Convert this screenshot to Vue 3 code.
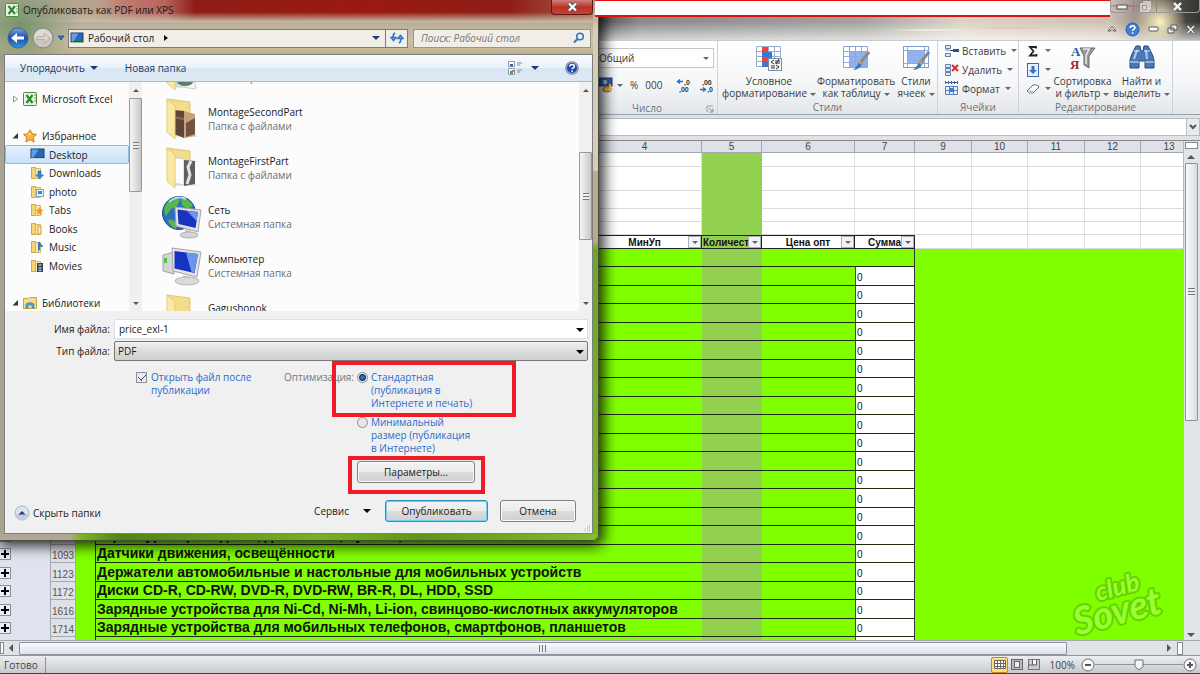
<script setup>
import { ref } from 'vue'

const fileName = ref('price_exl-1')
const openAfter = ref(true)
const optimize = ref('standard')

const favorites = [
  { name: 'Desktop', kind: 'desktop' },
  { name: 'Downloads', kind: 'down' },
  { name: 'photo', kind: 'photo' },
  { name: 'Tabs', kind: 'star' },
  { name: 'Books', kind: 'book' },
  { name: 'Music', kind: 'music' },
  { name: 'Movies', kind: 'film' },
]

const files = [
  { name: '', type: 'Папка с файлами', icon: 'folder0' },
  { name: 'MontageSecondPart', type: 'Папка с файлами', icon: 'folder1' },
  { name: 'MontageFirstPart', type: 'Папка с файлами', icon: 'folder2' },
  { name: 'Сеть', type: 'Системная папка', icon: 'net' },
  { name: 'Компьютер', type: 'Системная папка', icon: 'pc' },
  { name: 'Gagushonok', type: 'Папка с файлами', icon: 'folder3' },
]

const columns = ['', '3', '4', '5', '6', '7', '9', '10', '11', '12', '13']

const named = [
  { n: '1011', text: 'Гарнитуры проводные, джойстики, пульты, мыши', sum: '0' },
  { n: '1093', text: 'Датчики движения, освещённости', sum: '0' },
  { n: '1123', text: 'Держатели автомобильные и настольные для мобильных устройств', sum: '0' },
  { n: '1172', text: 'Диски CD-R, CD-RW, DVD-R, DVD-RW, BR-R, DL, HDD, SSD', sum: '0' },
  { n: '1616', text: 'Зарядные устройства для Ni-Cd, Ni-Mh, Li-ion, свинцово-кислотных аккумуляторов', sum: '0' },
  { n: '1714', text: 'Зарядные устройства для мобильных телефонов, смартфонов, планшетов', sum: '0' },
]
const rows = [...Array.from({ length: 14 }, () => ({ n: '', text: '', sum: '0' })), ...named, { n: '', text: '', sum: '' }]
</script>

<template>
  <div class="screen">
    <main class="excel">
      <header class="titlebar">
        <div class="wincontrols">
          <button aria-label="Свернуть"><svg width="12" height="8"><rect x="1" y="3" width="10" height="4" fill="#eee" stroke="#555" /></svg></button>
          <button aria-label="Восстановить"><svg width="12" height="11"><path d="M4 1h7v7h-2M2 3h7v7h-7z" fill="none" stroke="#ddd" stroke-width="1.5" /><rect x="4" y="5" width="3" height="3" fill="#ddd" /></svg></button>
          <button class="wide" aria-label="Закрыть"><svg width="12" height="9"><path d="M2 1l7 7M9 1l-7 7" stroke="#f5f5f5" stroke-width="2.4" /></svg></button>
        </div>
        <div class="mdi">
          <button aria-label="Свернуть ленту"><svg width="10" height="8"><path d="M1 6L5 1.500L9 6L7 6L5 4.500L3 6z" fill="#fff" stroke="#555" /></svg></button>
          <button aria-label="Справка"><svg width="15" height="15"><circle cx="7.500" cy="7.500" r="6.500" fill="#3d7fd0" stroke="#2a62aa" /><path d="M5.200 6c0-3 4.800-3 4.800-.4 0 1.600-2.400 1.600-2.400 3.300M7.600 10.200v1.600" stroke="#fff" stroke-width="1.600" fill="none" /></svg></button>
          <button aria-label="Свернуть книгу"><svg width="11" height="6"><rect x="1" y="1" width="9" height="4" rx="1" fill="#fff" stroke="#555" /></svg></button>
          <button aria-label="Восстановить книгу"><svg width="11" height="10"><path d="M4 1h6v5h-6zM1 4h6v5h-6z" fill="#eee" stroke="#555" /></svg></button>
          <button aria-label="Закрыть книгу"><svg width="10" height="9"><path d="M1.500 1l6.500 7M8 1l-6.500 7" stroke="#555" stroke-width="3" /><path d="M1.500 1l6.500 7M8 1l-6.500 7" stroke="#eee" stroke-width="1.500" /></svg></button>
        </div>
      </header>

      <section class="ribbon">
        <div class="group number">
          <div class="numtools">
            <button class="numfmt">Общий<i class="tri"></i></button>
            <div class="numrow">
              <button aria-label="Финансовый формат">
                <svg width="16" height="16"><rect x="1" y="1" width="13" height="8" fill="#2f5d9f" stroke="#1e427a" /><circle cx="7" cy="5" r="2.200" fill="#a9c4ea" /><path d="M5 11q4-3 8 0v3q-4 2-8 0z" fill="#e5a93c" stroke="#a66b12" /><path d="M12 7v7" stroke="#f3c04f" stroke-width="2" /></svg><i class="tri"></i>
              </button>
              <button>%</button>
              <button>000</button>
              <span class="vline"></span>
              <button aria-label="Увеличить разрядность"><svg width="16" height="15"><path d="M7 3.500H2M4 1.500L1.500 3.500L4 5.500" stroke="#2b6fc4" stroke-width="1.400" fill="none" /><text x="8" y="7" class="dec">,0</text><text x="3" y="14" class="dec">,00</text></svg></button>
              <button aria-label="Уменьшить разрядность"><svg width="16" height="15"><text x="3" y="7" class="dec">,00</text><path d="M1 11.500h5M4 9.500l2.500 2L4 13.500" stroke="#2b6fc4" stroke-width="1.400" fill="none" /><text x="8" y="14" class="dec">,0</text></svg></button>
            </div>
          </div>
          <div class="gtitle">Число<svg class="launch" width="8" height="8"><path d="M1 7V1h6" fill="none" stroke="#999" /><path d="M3 3l3 3M7 3.500V7H3.500" fill="none" stroke="#888" /></svg></div>
        </div>

        <div class="group styles">
          <div class="big">
            <button class="bigbtn cond">
              <svg width="28" height="26">
                <path d="M1.500 1.500h24v20h-24zM1.500 6.500h24M1.500 11.500h24M1.500 16.500h24M7.500 1.500v20M13.500 1.500v20M19.500 1.500v20" fill="#fff" stroke="#98aed0" />
                <rect x="7" y="2" width="6" height="5" fill="#f0413c" /><rect x="7" y="7" width="10" height="5" fill="#3e73d2" /><rect x="7" y="12" width="10" height="5" fill="#f0413c" /><rect x="7" y="17" width="6" height="5" fill="#3e73d2" />
                <rect x="13.500" y="13.500" width="13" height="12" fill="#f5f5f5" stroke="#7890a8" /><path d="M19 15l-3 2 3 2M20 16h5M20 18h5M24 14l-3 5M16 21h4M16 23h4M21 20l3 2-3 2" stroke="#333" fill="none" />
              </svg>
              <span>Условное<br>форматирование<i class="tri"></i></span>
            </button>
            <button class="bigbtn fmt">
              <svg width="28" height="26">
                <path d="M1.500 1.500h24v21h-24z" fill="#fff" stroke="#8aa6d6" /><rect x="8" y="6" width="17" height="16" fill="#8fb3f0" />
                <path d="M1.500 6.500h24M1.500 11.500h24M1.500 17.500h24M7.500 1.500v21M13.500 1.500v21M19.500 1.500v21" stroke="#8fa9d8" />
                <path d="M27 7L18 18" stroke="#8a8a8a" stroke-width="3" /><path d="M18 15l3 3q-3 7-10 7q4-3 7-10z" fill="#3d78bd" /><path d="M17 16l3 3" stroke="#d49a58" stroke-width="2.500" />
              </svg>
              <span>Форматировать<br>как таблицу<i class="tri"></i></span>
            </button>
            <button class="bigbtn cells">
              <svg width="28" height="26">
                <path d="M1.500 1.500h25v21h-25z" fill="#fff" stroke="#7d9bc8" /><path d="M1.500 5.500h25M1.500 18.500h25M5.500 1.500v21M22.500 1.500v21" stroke="#8fa9d8" /><rect x="6" y="6" width="16" height="12" fill="#8fb3f0" />
                <path d="M27 7L18 18" stroke="#8a8a8a" stroke-width="3" /><path d="M18 15l3 3q-3 7-10 7q4-3 7-10z" fill="#3d78bd" /><path d="M17 16l3 3" stroke="#d49a58" stroke-width="2.500" />
              </svg>
              <span>Стили<br>ячеек<i class="tri"></i></span>
            </button>
          </div>
          <div class="gtitle">Стили</div>
        </div>

        <div class="group cellgrp">
          <div class="small">
            <button><svg width="16" height="14"><path d="M1.500 1.500h5v3h-5zM1.500 9.500h5v3h-5zM1.500 6h4" fill="#dfe9f8" stroke="#5f7fae" /><path d="M6 6.500h3" stroke="#333" /><rect x="9" y="5" width="6" height="3" fill="#24508f" /></svg>Вставить<i class="tri"></i></button>
            <button><svg width="16" height="14"><path d="M1.500 1.500h5v3h-5zM1.500 5.500h5v3h-5zM1.500 9.500h5v3h-5z" fill="#dfe9f8" stroke="#5f7fae" /><path d="M8 2l6 6M14 2l-6 6" stroke="#e0262c" stroke-width="2" /></svg>Удалить<i class="tri"></i></button>
            <button><svg width="16" height="15"><path d="M1 1.500h12M1.500 0v3M4.500 0v3M7.500 0v3M10.500 0v3M13.500 0v3" stroke="#445f8c" /><path d="M1.500 5.500h12v8h-12zM1.500 9.500h12M5.500 5.500v8M9.500 5.500v8" fill="#e5eefb" stroke="#5f7fae" /><rect x="5" y="7" width="5" height="4" fill="#3f79cf" /></svg>Формат<i class="tri"></i></button>
          </div>
          <div class="gtitle">Ячейки</div>
        </div>

        <div class="group editgrp">
          <div class="editrow">
            <div class="small icons">
              <button aria-label="Сумма"><svg width="14" height="14"><path d="M10 4.500V3H4l3.500 4.200L4 11.500h6.500V10" fill="none" stroke="#222" stroke-width="1.800" /></svg><i class="tri"></i></button>
              <button aria-label="Заполнить"><svg width="14" height="14"><rect x="1.500" y=".5" width="11" height="13" fill="#e8f0fb" stroke="#3c66a8" /><path d="M5.500 3h3v4h2.500L7 11 3 7h2.500z" fill="#2f72cc" /></svg><i class="tri"></i></button>
              <button aria-label="Очистить"><svg width="14" height="14"><path d="M1 9l6-6q3-1 5 1l1 1-6 6H3z" fill="#fff" stroke="#566a8a" /><path d="M1.500 9.500l2-1.500 4 1-1 2.500H3z" fill="#b9c8e0" /></svg><i class="tri"></i></button>
            </div>
            <button class="bigbtn sort">
              <svg width="30" height="28"><text x="3" y="12" class="ltr a">А</text><text x="2" y="25" class="ltr ya">Я</text><path d="M12 4h15l-6 8v12l-5-3v-9z" fill="#9a9a9a" stroke="#6b6b6b" /><path d="M15 5h6l-3 7v8" fill="none" stroke="#e8e8e8" stroke-width="1.500" /></svg>
              <span>Сортировка<br>и фильтр<i class="tri"></i></span>
            </button>
            <button class="bigbtn find">
              <svg width="28" height="28"><path d="M6 6l2-4h4l1 5h2l1-5h4l2 4q3 5 4 10v8h-9v-7h-6v7H2v-8q1-5 4-10z" fill="#4c78b6" stroke="#28497b" /><path d="M6 15l3-9M19 15l-1-9" stroke="#b5cdee" stroke-width="2" /><path d="M2 18h9M17 18h9M6 7h6M16 7h6" stroke="#dce8f8" /></svg>
              <span>Найти и<br>выделить<i class="tri"></i></span>
            </button>
          </div>
          <div class="gtitle">Редактирование</div>
        </div>
        <div class="ribbonend"></div>
      </section>

      <section class="formula">
        <input class="fx" aria-label="Строка формул">
        <button class="fxdrop" aria-label="Развернуть"><svg width="8" height="8"><path d="M1 2l3 3 3-3" fill="none" stroke="#555" stroke-width="2" /></svg></button>
      </section>

      <section class="work">
        <div class="sheet">
          <table>
            <colgroup>
              <col class="w50"><col class="w26"><col class="w19"><col class="wname"><col class="w114"><col class="w60"><col class="w93"><col class="w60"><col class="w57"><col class="w56"><col class="w57"><col class="w56"><col>
            </colgroup>
            <thead>
              <tr>
                <th class="gut"></th><th class="corner"></th>
                <th v-for="(c, i) in columns" :key="i" class="colh">{{ c }}</th>
              </tr>
            </thead>
            <tbody class="top">
              <tr v-for="k in 5" :key="k" :class="'r' + k">
                <td class="gut"></td><td class="rowh"></td><td></td><td></td><td></td><td class="olive"></td><td></td><td></td><td></td><td></td><td></td><td></td><td></td>
              </tr>
              <tr class="filters">
                <td class="gut"></td><td class="rowh"></td><td></td><td class="hd"></td>
                <td class="hd"><div><span>МинУп</span><button aria-label="Фильтр МинУп"><i class="tri"></i></button></div></td>
                <td class="hd olive"><div class="start"><span>Количест</span><button aria-label="Фильтр Количество"><i class="tri"></i></button></div></td>
                <td class="hd"><div><span>Цена опт</span><button aria-label="Фильтр Цена опт"><i class="tri"></i></button></div></td>
                <td class="hd"><div class="end"><span>Сумма</span><button aria-label="Фильтр Сумма"><i class="tri"></i></button></div></td>
                <td></td><td></td><td></td><td></td><td></td>
              </tr>
            </tbody>
            <tbody class="goods">
              <tr class="first">
                <td class="gut"></td><td class="rowh"></td><td class="lime"></td><td class="lime line name" colspan="2"></td><td class="olive line"></td><td class="lime line"></td><td class="lime line last"></td><td class="lime" colspan="5"></td>
              </tr>
              <tr v-for="(r, i) in rows" :key="i">
                <td class="gut"><button v-if="r.n" class="plus" :aria-label="'Развернуть ' + r.n"><svg width="8" height="8"><path d="M4 0v8M0 4h8" stroke="#000" stroke-width="2" /></svg></button></td>
                <td class="rowh">{{ r.n }}</td>
                <td class="lime"></td>
                <td class="lime line name" colspan="2">{{ r.text }}</td>
                <td class="olive line"></td>
                <td class="lime line"></td>
                <td class="sum line last">{{ r.sum }}</td>
                <td class="lime" colspan="5"></td>
              </tr>
            </tbody>
          </table>
          <svg class="mark" width="106" height="90" viewBox="0 0 106 90">
            <g transform="rotate(-15 50 60)">
              <text x="7" y="75" class="sovet">Sovet</text>
              <text x="36" y="47" class="club">club</text>
            </g>
          </svg>
        </div>
        <div class="vscroll">
          <span class="split"></span>
          <i class="up"></i>
          <span class="thumb"><b class="grip"></b></span>
          <span class="fill"></span>
          <i class="down"></i>
        </div>
      </section>

      <div class="hscroll">
        <span class="stub"></span><i class="left"></i>
        <span class="thumb"><b class="grip side"></b></span>
        <span class="space"></span>
        <i class="right"></i><span class="hsplit"></span><span class="hend"></span>
      </div>

      <footer class="status">
        <span class="ready">Готово</span>
        <span class="grow"></span>
        <button class="view on" aria-label="Обычный"><svg width="12" height="9"><path d="M.5.5h11v8H.5zM.5 3.500h11M.5 6.500h11M3.500.5v8M6.500.5v8M9.500.5v8" fill="#fff" stroke="#66645c" /></svg></button>
        <button class="view" aria-label="Разметка страницы"><svg width="12" height="11"><rect x=".5" y=".5" width="11" height="10" fill="#bbb" stroke="#666" /><rect x="3.500" y="2.500" width="5" height="6" fill="#eee" stroke="#666" /></svg></button>
        <button class="view" aria-label="Страничный режим"><svg width="12" height="11"><rect x=".5" y=".5" width="11" height="10" fill="#ccc" stroke="#777" /><path d="M4.500 0v6M8.500 0v6H0" fill="none" stroke="#666" /><rect x="5" y="1" width="3" height="4" fill="#fff" /></svg></button>
        <span class="pct">100%</span>
        <button class="zoombtn" aria-label="Уменьшить"><svg width="14" height="14"><circle cx="7" cy="7" r="6" fill="#fafafa" stroke="#6a6f76" /><path d="M4 7h6" stroke="#555" stroke-width="2" /></svg></button>
        <span class="track"><svg width="10" height="12"><path d="M1 1h8v6.500L5 11 1 7.500z" fill="#f4f4f4" stroke="#6a6f76" /></svg></span>
        <button class="zoombtn" aria-label="Увеличить"><svg width="14" height="14"><circle cx="7" cy="7" r="6" fill="#fafafa" stroke="#6a6f76" /><path d="M4 7h6M7 4v6" stroke="#555" stroke-width="2" /></svg></button>
      </footer>
    </main>

    <section class="dialog" role="dialog" aria-label="Опубликовать как PDF или XPS">
      <header class="dtitle">
        <svg width="14" height="14"><rect x=".5" y=".5" width="13" height="13" rx="1" fill="#e9f3e2" stroke="#4d8a3d" /><path d="M3.500 3l6.500 8M10 3l-6.500 8" stroke="#2c8a2f" stroke-width="2.200" /><path d="M11 3h2M11 6h2M11 9h2" stroke="#6aa65a" /></svg>
        <span>Опубликовать как PDF или XPS</span>
        <button class="dclose" aria-label="Закрыть"><svg width="12" height="10"><path d="M2 1.500l7 7M9 1.500l-7 7" stroke="#555" stroke-width="4" /><path d="M2 1.500l7 7M9 1.500l-7 7" stroke="#fff" stroke-width="2.200" /></svg></button>
      </header>

      <div class="address">
        <button aria-label="Назад"><svg width="22" height="22"><defs><linearGradient id="bk" x1="0" y1="0" x2="0" y2="1"><stop offset="0" stop-color="#7fa3dd" /><stop offset=".5" stop-color="#1b4da8" /><stop offset="1" stop-color="#2f9bea" /></linearGradient></defs><circle cx="11" cy="11" r="10" fill="url(#bk)" stroke="#4a5f86" /><path d="M4 11l6-5v3.500h7v3h-7V16z" fill="#fff" /></svg></button>
        <button aria-label="Вперёд"><svg width="22" height="22"><circle cx="11" cy="11" r="10" fill="#c9c6bf" stroke="#85817a" /><path d="M2 11a9 9 0 0 1 18 0z" fill="#dedbd6" /><path d="M18 11l-6-5v3.500H5v3h7V16z" fill="#d8d5cf" stroke="#b6b2aa" /></svg></button>
        <svg width="8" height="6" class="histo"><path d="M1 1h6L4 5z" fill="#3a78c0" stroke="#27599a" /></svg>
        <div class="path">
          <svg width="14" height="12"><rect x="1" y="1" width="12" height="9" fill="#2867b4" stroke="#17396b" /><path d="M1.500 1.500h7l-5 8h-2z" fill="#63a0df" /><path d="M1 10.500h12" stroke="#9cc26a" /></svg>
          <span>Рабочий стол</span>
          <svg width="6" height="8"><path d="M1 1l4 3-4 3z" fill="#111" /></svg>
          <i class="tri navy"></i>
        </div>
        <button class="refresh" aria-label="Обновить"><svg width="14" height="12"><path d="M5 1Q3 2 3 6M1 5.500h5L3.500 8.500z" fill="none" stroke="#2f74c8" stroke-width="1.600" /><path d="M9 11q2-1 2-5M8 6.500h5L10.500 3.500z" fill="none" stroke="#2f74c8" stroke-width="1.600" /></svg></button>
        <label class="search"><input type="search" placeholder="Поиск: Рабочий стол" aria-label="Поиск"><svg width="12" height="12"><circle cx="7" cy="4.500" r="3.300" fill="none" stroke="#2f74c0" stroke-width="1.600" /><path d="M4.500 7L1 10.500" stroke="#2f74c0" stroke-width="2" /></svg></label>
      </div>

      <div class="client">
        <nav class="tools">
          <button>Упорядочить<i class="tri navy"></i></button>
          <button>Новая папка</button>
          <button class="viewsel" aria-label="Вид"><svg width="15" height="14"><path d="M.5.5h6v5h-6zM.5 7.500h6v6h-6z" fill="#fff" stroke="#8b9bb2" /><rect x="2" y="3" width="3" height="2" fill="#355f93" /><rect x="2" y="10" width="3" height="3" fill="#5aa03a" /><path d="M3 9h3v2z" fill="#d85a2a" /><path d="M9 2h5M9 4h3M9 9h5M9 11h3" stroke="#7f8fa6" /></svg><i class="tri navy"></i></button>
          <button class="help" aria-label="Справка"><svg width="14" height="14"><circle cx="7" cy="7" r="6" fill="#1f49b4" stroke="#9aa0ae" stroke-width="2" /><path d="M4.800 5.600c0-2.800 4.600-2.800 4.600-.3 0 1.600-2.300 1.500-2.300 3M7.100 9.400v1.600" stroke="#fff" stroke-width="1.500" fill="none" /></svg></button>
        </nav>

        <div class="panes">
          <div class="tree">
            <div class="node root"><svg width="8" height="8"><path d="M1.500 1l4 3-4 3z" fill="#fff" stroke="#999" /></svg>
              <svg width="15" height="14"><rect x=".5" y=".5" width="13" height="13" rx="1" fill="#e9f3e2" stroke="#4d8a3d" /><path d="M3.500 3l6 8M9.500 3l-6 8" stroke="#2c8a2f" stroke-width="2.200" /><path d="M11 3h2M11 6h2M11 9h2" stroke="#6aa65a" /></svg>Microsoft Excel</div>
            <div class="node root gap"><svg width="8" height="8"><path d="M6 1v5.500H.5z" fill="#333" /></svg>
              <svg width="15" height="14"><path d="M7 .8l2 4 4.500.6-3.300 3 .9 4.600L7 10.800 2.900 13l.9-4.600-3.300-3L5 4.800z" fill="#fbb62e" stroke="#cf7d22" /><path d="M7 3l1 3H5z" fill="#ffe7a0" /></svg>Избранное</div>
            <a v-for="f in favorites" :key="f.name" href="#" class="node leaf" :class="{ sel: f.kind === 'desktop' }">
              <svg v-if="f.kind === 'desktop'" width="15" height="13"><rect x="1" y="1" width="13" height="9" fill="#2867b4" stroke="#17396b" /><path d="M1.500 1.500h7l-5 8h-2z" fill="#63a0df" /><path d="M1 10.500h13" stroke="#c8d4de" /></svg>
              <svg v-else width="15" height="14">
                <path d="M1.500 1.500h4v11h-4z" fill="#f3d67a" stroke="#cfa649" /><path d="M5.500 2.500h5v10h-5z" fill="#fae9a8" stroke="#d8b45c" />
                <path v-if="f.kind === 'down'" d="M8 5h3v4h2.500L9.500 13 6 9h2z" fill="#2c86dd" stroke="#1c5eae" stroke-width=".6" />
                <g v-else-if="f.kind === 'photo'"><rect x="6.500" y="4.500" width="7" height="7" fill="#e6f2fa" stroke="#8fa4b5" /><rect x="8" y="6" width="4" height="3" fill="#3f87c9" /></g>
                <path v-else-if="f.kind === 'star'" d="M9.500 4l1.200 2.500 2.800.3-2 2 .6 3-2.600-1.400L7 11.800l.5-3-2-2 2.800-.3z" fill="#f5941f" />
                <path v-else-if="f.kind === 'book'" d="M8 4h3v8H8z" fill="#fdf3c8" stroke="#c89a3a" />
                <path v-else-if="f.kind === 'music'" d="M9 2v8M9 2q0 3 3.500 4.500M8 10.500h1" stroke="#2f7bd0" stroke-width="2" fill="none" />
                <g v-else><rect x="7" y="4" width="6" height="9" fill="#34414f" /><path d="M8.500 6h3M8.500 9h3M8.500 11.500h3" stroke="#9fc3de" stroke-width="1.500" /></g>
              </svg>{{ f.name }}</a>
            <div class="node root gap"><svg width="8" height="8"><path d="M6 1v5.500H.5z" fill="#333" /></svg>
              <svg width="15" height="14"><path d="M.5 2.500h5l1-1h7v11H.5z" fill="#f5dc85" stroke="#c9a24a" /><path d="M3 12V8q4-3 8 0v4h-2V9H5v3z" fill="#4ba5dc" stroke="#2d7db8" stroke-width=".6" /></svg>Библиотеки</div>
          </div>
          <div class="wscroll treescroll"><i class="up"></i><span class="thumb t1"><b class="grip"></b></span><span class="rest"></span><i class="down"></i></div>
          <div class="files">
            <ul>
              <li v-for="(f, i) in files" :key="i">
                <svg v-if="f.icon === 'net'" width="42" height="44">
                  <circle cx="18" cy="18" r="16.500" fill="#2d6fc0" stroke="#1d4f95" /><path d="M6 8q8-7 13-3l-3 6-6 3-5 7q-4-7 1-13zM20 3q9 1 12 8l-6 3-5-4zM9 24l7 3-1 7q-6-3-8-8z" fill="#57b747" /><path d="M8 7q8-7 17-3" stroke="#b5dcf5" stroke-width="2" fill="none" />
                  <path d="M14 12l26 3-3 22-22-6z" fill="#e2e2e2" stroke="#a5a5a5" /><path d="M16.500 14.500l20.500 2.500-2.500 16-17-4z" fill="#1634c0" /><path d="M26 16l11 1-1.500 9z" fill="#6f93f0" /><path d="M24 34l6 2v3h-6z" fill="#c8c8c8" /><ellipse cx="28" cy="40" rx="9" ry="3" fill="#d5d5d5" stroke="#b0b0b0" />
                </svg>
                <svg v-else-if="f.icon === 'pc'" width="42" height="44">
                  <path d="M2 11l11-3v22l-11-3z" fill="#d4d4d4" stroke="#a3a3a3" /><rect x="3" y="14" width="3" height="5" fill="#4cc63a" />
                  <path d="M11 4l29 4-4 25-24-6z" fill="#e4e4e4" stroke="#a5a5a5" /><path d="M13.500 7l23.500 3-3.500 19-20-4.500z" fill="#1634c0" /><path d="M25 8.500l12 1.500-3.500 18.500-3-.5z" fill="#6f93f0" /><path d="M22 31l8 2v4h-8z" fill="#c8c8c8" /><ellipse cx="26" cy="37" rx="12" ry="4" fill="#dadada" stroke="#b5b5b5" />
                </svg>
                <svg v-else width="42" height="44">
                  <path d="M12 37h22l4 3H14z" fill="#e9e9e9" />
                  <path d="M6 2l23 3v33H10z" fill="#f4dc8a" stroke="#e2c672" />
                  <g v-if="f.icon === 'folder1'"><path d="M13 13l10 1v27l-10-4z" fill="#5f4538" /><path d="M23 14l11 3v22l-11 2z" fill="#c7a37b" /><path d="M25 26l9-5v16l-9 3z" fill="#715342" /><path d="M13 20l10 2" stroke="#8a6a55" stroke-width="2" /></g>
                  <g v-else-if="f.icon === 'folder2'"><path d="M12 11l11 2v26l-11-2z" fill="#fbfbfb" stroke="#ccc" /><path d="M23 14l11 1v23l-11 2z" fill="#5f5f5f" /><path d="M30 15l-3 6 2 8-3 9" stroke="#e3e3e3" stroke-width="3" fill="none" /></g>
                  <g v-else-if="f.icon === 'folder0'"><path d="M14 28h20v13l-18-3z" fill="#f7f7f7" stroke="#ccc" /><ellipse cx="24" cy="34" rx="8" ry="4" fill="#5d7f67" /></g>
                  <path d="M6 2l8 7v33L6 35z" fill="#fae9a6" stroke="#e6cb78" />
                </svg>
                <div><p>{{ f.name }}</p><p class="sub">{{ f.type }}</p></div>
              </li>
            </ul>
          </div>
          <div class="wscroll"><i class="up"></i><span class="rest top2"></span><span class="thumb t2"><b class="grip"></b></span><span class="rest"></span><i class="down"></i></div>
        </div>

        <form class="form" @submit.prevent>
          <div class="fields">
            <label for="fname">Имя файла:</label>
            <div class="combo"><input id="fname" v-model="fileName"><i class="tri black"></i></div>
            <label for="ftype">Тип файла:</label>
            <div class="combo gray"><select id="ftype"><option>PDF</option></select><i class="tri black"></i></div>
          </div>
          <div class="options">
            <label class="opt check"><input v-model="openAfter" type="checkbox"><span>Открыть файл после<br>публикации</span></label>
            <span class="optlabel">Оптимизация:</span>
            <div class="radios">
              <label class="opt"><input v-model="optimize" type="radio" name="opt" value="standard"><span>Стандартная<br>(публикация в<br>Интернете и печать)</span></label>
              <label class="opt"><input v-model="optimize" type="radio" name="opt" value="min"><span>Минимальный<br>размер (публикация<br>в Интернете)</span></label>
              <button class="btn params">Параметры...</button>
            </div>
          </div>
          <div class="actions">
            <button class="hide"><svg width="16" height="16"><circle cx="8" cy="8" r="7" fill="#dde5f0" stroke="#aab4c4" /><path d="M2 9a6 6 0 0 0 12 0z" fill="#c2cedf" /><path d="M4.500 9.500h7L8 6z" fill="#1f3f7a" /></svg>Скрыть папки</button>
            <button class="service">Сервис<i class="tri black"></i></button>
            <button class="btn primary">Опубликовать</button>
            <button class="btn cancel">Отмена</button>
          </div>
          <svg class="resize" width="8" height="8"><path d="M6 1h1M4 3h1M6 3h1M2 5h1M4 5h1M6 5h1M1 7h1M4 7h1M6 7h1" stroke="#aaa" /></svg>
        </form>
      </div>
      <div class="mark-box one"></div>
      <div class="mark-box two"></div>
    </section>
    <div class="redbar"></div>
  </div>
</template>

<style>
html, body { margin: 0; overflow: hidden; }
</style>

<style scoped>
* { box-sizing: border-box; }
.screen { position: relative; height: 100vh; overflow: hidden; font-family: "Open Sans", "Noto Sans", sans-serif; font-size: 10px; color: #1e1e1e; }
button { font: inherit; color: inherit; background: none; border: 0; padding: 0; margin: 0; display: flex; align-items: center; }
input, select { font: inherit; color: inherit; margin: 0; }
svg { display: block; flex: none; }
p { margin: 0; }
.tri { display: inline-block; flex: none; width: 0; height: 0; border: 3px solid transparent; border-top-color: #666; border-bottom: 0; vertical-align: middle; margin-left: 3px; }
.tri.navy { border-width: 4px 4px 0; border-top-color: #1e3a6e; margin-left: 5px; }
.tri.black { border-width: 4px 4px 0; border-top-color: #000; }

.excel { height: 100%; display: flex; flex-direction: column; background: #dfe3e8; }
.titlebar { height: 40px; flex: none; display: flex; flex-direction: column; align-items: flex-end; gap: 9px;
  background:
    radial-gradient(circle at 1160px 22px, #fff3c4 0, #fff3c400 26px),
    radial-gradient(ellipse at 1122px 6px, #b04045 0, #b0404500 28px),
    radial-gradient(ellipse at 1010px 28px, #e9b8b0 0, #e9b8b000 44px),
    radial-gradient(ellipse at 930px 30px, #f8f5e6 0, #f8f5e600 44px),
    linear-gradient(#0000 22px, #ffffffa8 40px),
    linear-gradient(90deg, #555 0, #555 598px, #8a8a8a 640px, #a3a29e 860px, #dcd3c6 960px, #cfc0b4 1110px, #4d4a44 1180px, #333 100%); }
.wincontrols { display: flex; height: 13px; border: solid #999; border-width: 0 1px 1px; border-radius: 0 0 4px 4px; }
.wincontrols button { width: 23px; justify-content: center; border-right: 1px solid #888; }
.wincontrols .wide { width: 42px; border: 0; }
.mdi { display: flex; align-items: center; gap: 8px; padding-right: 4px; height: 14px; }

.ribbon { height: 75px; flex: none; display: flex; justify-content: flex-end; background: linear-gradient(#fff, #f6f7f9 55%, #e3e6ea); border-top: 1px solid #c9ccd0; border-bottom: 1px solid #9aa0a8; color: #3b3b3b; }
.group { display: flex; flex-direction: column; justify-content: space-between; border-right: 1px solid #cfd3d8; }
.group.number { width: 141px; }
.group.styles { width: 220px; }
.group.cellgrp { width: 81px; }
.group.editgrp { width: 154px; }
.ribbonend { width: 27px; }
.gtitle { position: relative; text-align: center; line-height: 13px; color: #6c727a; }
.launch { position: absolute; right: 3px; top: 3px; }
.numtools { padding: 7px 3px 0 1px; }
.numfmt { width: 100%; height: 20px; border: 1px solid #c3c7cc; background: #fff; padding: 0 4px 0 20px; justify-content: space-between; }
.numrow { display: flex; align-items: center; height: 34px; padding-left: 20px; gap: 7px; }
.vline { width: 1px; height: 16px; background: #d0d4d8; }
.dec { font: bold 7px "Liberation Sans", sans-serif; fill: #333; }
.big { display: flex; padding: 4px 0 0 5px; }
.bigbtn { flex-direction: column; gap: 4px; line-height: 12px; text-align: center; white-space: nowrap; }
.cond { width: 92px; }
.fmt { width: 82px; }
.cells { width: 38px; }
.small { display: flex; flex-direction: column; padding: 0 0 0 6px; }
.small button { height: 19px; gap: 2px; }
.editrow { display: flex; }
.small.icons { padding: 0 0 0 7px; width: 32px; }
.editrow .bigbtn { padding-top: 3px; gap: 3px; }
.sort { width: 63px; }
.find { width: 55px; }
.ltr { font: bold 13px "Liberation Serif", serif; }
.ltr.a { fill: #2856a6; }
.ltr.ya { fill: #9c2b2b; }

.formula { height: 25px; flex: none; display: flex; padding: 3px 0 4px; background: #dfe3e8; }
.fx { flex: 1; min-width: 0; border: solid #b6bcc4; border-width: 1px 0; background: #fff; outline: none; }
.fxdrop { width: 14px; justify-content: center; border: 1px solid #b6bcc4; background: #e8eaee; }

.work { flex: 1; min-height: 0; display: flex; border-top: 1px solid #888; }
.sheet { flex: 1; min-width: 0; position: relative; overflow: hidden; background: #fff; font-family: "Liberation Sans", Arial, sans-serif; }
table { table-layout: fixed; width: 100%; min-width: 1198px; border-collapse: separate; border-spacing: 0; }
.w50 { width: 50px; } .w26 { width: 26px; } .w19 { width: 19px; } .wname { width: 493px; } .w114 { width: 114px; }
.w60 { width: 60px; } .w93 { width: 93px; } .w57 { width: 57px; } .w56 { width: 56px; }
th, td { padding: 0; line-height: 11px; white-space: nowrap; }
th { height: 12px; font-weight: normal; font-size: 10px; color: #444; background: #dee1e8; border-right: 1px solid #a4a8b0; border-bottom: 1px solid #a4a8b0; }
.gut { background: #dfe3ee; border: 0; }
.rowh { background: #dee1e8; border: solid #a4a8b0; border-width: 0 1px 1px; text-align: center; color: #555; font-size: 10px; vertical-align: bottom; padding-bottom: 1px; }
.top td:not(.gut):not(.rowh) { border-right: 1px solid #e0e0e0; border-bottom: 1px solid #dadada; }
.top td.olive:not(.hd) { border-color: #92d050 !important; }
.olive { background: #92d050; }
.lime { background: #80ff00; }
.r1 { height: 14px; } .r2 { height: 24px; } .r3 { height: 18px; } .r4 { height: 13px; } .r5 { height: 13px; }
.filters { height: 14px; }
.filters td { height: 14px; }
.top .filters td.hd { border: solid #222; border-width: 1px 1px 1px 0; font-weight: bold; font-size: 10px; color: #111; }
.hd div { position: relative; display: flex; height: 12px; align-items: center; }
.hd span { flex: 1; text-align: center; }
.hd .start span { text-align: left; padding-left: 1px; }
.hd .end span { text-align: right; padding-right: 13px; }
.hd button { position: absolute; right: 0; top: 0; width: 13px; height: 12px; justify-content: center; background: #f2f4f8; border: 1px solid #aab0ba; }
.hd .tri { margin: 0; }
.goods tr { height: 19px; }
.goods tr:nth-child(odd) { height: 18px; }
.line { border-bottom: 1px solid #1c2a10; }
.name { border-left: 1px solid #1c2a10; padding: 0 0 1px 1px; font-weight: bold; font-size: 14px; line-height: 16px; color: #111; }
.last { border-right: 1px solid #333; }
.sum { background: #fff; border-left: 1px solid #444; padding: 0 0 2px 1px; font-size: 10px; vertical-align: bottom; color: #111; }
.plus { width: 12px; height: 12px; margin-left: -1px; border: 1px solid #8a909a; background: #eceef4; justify-content: center; }
.mark { position: absolute; right: 12px; bottom: 0; font-family: "Lato", sans-serif; font-style: italic; font-weight: bold; }
.mark text { fill: #99ff33; stroke: #66d400; stroke-width: 4px; stroke-linejoin: round; paint-order: stroke; }
.club { font-size: 25px; }
.sovet { font-size: 38px; }

.vscroll { width: 17px; flex: none; display: flex; flex-direction: column; align-items: center; gap: 4px; padding: 1px 3px 3px 1px; background: #e1e4e9; border-left: 1px solid #b5bac2; }
.split { width: 13px; height: 7px; border: 1px solid #888; background: #fff; }
.up, .down, .left, .right { flex: none; width: 0; height: 0; border: 4px solid transparent; }
.up { border-top: 0; border-bottom-color: #555; }
.down { border-bottom: 0; border-top-color: #555; }
.left { border-left: 0; border-right-color: #555; }
.right { border-right: 0; border-left-color: #555; }
.vscroll .up { margin-top: 2px; }
.vscroll .thumb { width: 13px; flex: 55 1 0; background: linear-gradient(90deg, #fafbfc, #d8dce2); }
.vscroll .fill { flex: 44 1 0; }
.thumb { display: flex; align-items: center; justify-content: center; border: 1px solid #8d939c; border-radius: 1px; }
.grip { width: 7px; height: 7px; background: repeating-linear-gradient(#777 0 1px, #eee 1px 3px); }
.grip.side { background: repeating-linear-gradient(90deg, #777 0 1px, #eee 1px 3px); }

.hscroll { height: 15px; flex: none; display: flex; align-items: center; background: #dfe3e8; border-top: 1px solid #a4a8b0; }
.stub { width: 4px; height: 12px; border: 1px solid #888; background: #fff; margin-right: 5px; }
.hscroll .thumb { flex: 1045 1 0; height: 13px; margin-left: 6px; background: linear-gradient(#f8f9fb, #dfe3e9); }
.space { flex: 100 1 0; }
.hsplit { width: 6px; height: 13px; border: 1px solid #888; background: #fff; margin-left: 6px; }
.hend { width: 17px; }

.status { height: 19px; flex: none; display: flex; align-items: center; border-top: 1px solid #9298a0; border-bottom: 1px solid #444; background: linear-gradient(#eceef0, #c6cacf); color: #444; }
.ready { width: 46px; padding-left: 4px; height: 16px; line-height: 16px; border-right: 1px solid #8d939a; }
.grow { flex: 1; }
.view { width: 17px; height: 16px; justify-content: center; border: 1px solid transparent; border-radius: 2px; }
.view.on { background: #ffdd7c; border-color: #c08a2c; }
.pct { width: 39px; text-align: right; padding-right: 6px; }
.zoombtn { flex: none; }
.track { width: 88px; display: flex; justify-content: center; background: linear-gradient(#8d939a, #8d939a) center / 100% 1px no-repeat; }
.status .zoombtn:last-child { margin-right: 3px; }

.redbar { position: absolute; left: 595px; right: 90px; top: 0; height: 17px; background: #fff; border: solid #e01010; border-width: 1px 0 2px; }

.dialog { position: absolute; left: 0; top: 0; width: 599px; display: flex; flex-direction: column; padding: 0 5px 6px 4px; border: solid #4b4b42; border-width: 0 1px 1px 0; border-radius: 0 0 6px 0; box-shadow: 2px 2px 14px 3px #000000d0; color: #1a1a1a;
  background:
    linear-gradient(90deg, #ada794 70px, #7cb520 80px, #4f8413 120px, #76b21e 320px, #5c9615 420px, #86bd2b) bottom / 100% 6px no-repeat,
    linear-gradient(#bd8a7c 0, #d5cdb8 30px, #d5cdb8 170px, #b7ad8c 172px, #b7ad8c 240px, #6ea628 250px, #7bb81f) right / 5px 100% no-repeat,
    radial-gradient(ellipse at 20px 26px, #77936c 0, #77936c00 60px),
    linear-gradient(#0000 12px, #c5bba6 22px, #c5bba600 23px),
    linear-gradient(90deg, #b4b09a 0, #b9a08c 100px, #c07a70 125px, #b8655c 165px, #8e1d14 195px, #9a1a12 60%, #8e1d14 85%, #ad5e4f) top / 100% 21px no-repeat,
    linear-gradient(#a99 17px, #bdb39c 26px, #cbc1a8 40px, #c4b58f 52px, #aaa390 56px); }
.dtitle { height: 20px; display: flex; align-items: center; gap: 4px; }
.dtitle span { flex: 1; }
.dtitle svg:first-child { margin-left: 1px; }
.dclose { align-self: flex-start; width: 42px; height: 15px; justify-content: center; background: linear-gradient(#d08078, #b83428 50%, #c8402f); border: 1px solid #5c1a16; border-top: 0; border-radius: 0 0 4px 4px; }
.address { height: 34px; display: flex; align-items: center; padding: 2px 2px 0 3px; }
.address > button { flex: none; }
.address > button:nth-child(2) { margin-left: 3px; }
.histo { margin: 0 3px; }
.path { flex: 1; height: 19px; display: flex; align-items: center; gap: 4px; padding: 0 5px 0 1px; background: #f1eee7; border: 1px solid #7d7a72; }
.path span { margin-right: 5px; }
.path .tri { margin-left: auto; }
.address .refresh { width: 22px; height: 19px; justify-content: center; background: #f1eee7; border: solid #7d7a72; border-width: 1px 1px 1px 0; }
.search { width: 178px; height: 19px; margin-left: 5px; display: flex; align-items: center; padding: 0 5px 0 7px; background: #f1eee7; border: 1px solid #98958c; }
.search input { flex: 1; min-width: 0; padding: 0; border: 0; background: none; outline: none; font-style: italic; }
.search input::placeholder { color: #777; opacity: 1; }

.client { border: 1px solid #7c7f80; background: #fcfcfc; }
.tools { height: 27px; display: flex; align-items: center; padding: 0 13px 0 15px; background: linear-gradient(#f8fbfe, #e9f1fa 50%, #dbe6f4 52%, #dde8f5); border-bottom: 1px solid #a9bacd; color: #1e395b; }
.tools button:nth-child(2) { margin-left: 27px; }
.tools .viewsel { margin-left: auto; gap: 3px; }
.tools .help { margin-left: 26px; }

.panes { height: 229px; display: flex; overflow: hidden; }
.tree { width: 124px; flex: none; padding-top: 8px; overflow: hidden; }
.node { display: flex; align-items: center; height: 18px; color: #1a1a1a; text-decoration: none; white-space: nowrap; border: 1px solid transparent; }
.node:nth-child(odd) { height: 19px; }
.node.root { gap: 4px; padding-left: 6px; height: 18px; }
.node.root svg:first-child { margin-right: -1px; }
.node.gap { margin-top: 19px; }
.leaf { gap: 4px; padding-left: 24px; }
.leaf.sel { background: linear-gradient(#e4f1fd, #c9e2fb); border-color: #8db9e4; border-radius: 2px; }
.wscroll { width: 13px; flex: none; display: flex; flex-direction: column; align-items: center; background: #f0f0f0; padding: 7px 0 6px; }
.treescroll { margin-right: 3px; }
.wscroll .up, .wscroll .down { border-left-width: 3px; border-right-width: 3px; }
.wscroll .up { border-bottom-width: 3px; margin-bottom: 6px; }
.wscroll .down { border-top-width: 3px; }
.wscroll .thumb { width: 13px; background: linear-gradient(90deg, #f5f5f5, #e0e0e0 50%, #c8c8c8); border-color: #999; }
.wscroll .grip { width: 6px; }
.t1.thumb { height: 94px; }
.t2.thumb { height: 88px; }
.top2 { flex: none !important; height: 54px; }
.rest { flex: 1; }
.files { flex: 1; min-width: 0; overflow: hidden; }
ul { list-style: none; margin: -37px 0 0; padding: 0; }
li { height: 49px; display: flex; align-items: center; gap: 5px; padding-left: 16px; line-height: 14px; }
li p { height: 14px; }
.sub { color: #6d6d6d; }

.form { position: relative; background: #f0f0f0; padding: 8px 4px 11px 0; }
.fields { display: grid; grid-template-columns: 105px 1fr; row-gap: 2px; column-gap: 4px; align-items: center; }
.fields label { text-align: right; }
.combo { position: relative; display: flex; height: 20px; border: 1px solid #dcdfe6; background: #fff; }
.combo.gray { background: linear-gradient(#f0f0f0, #ddd 50%, #cfcfcf); border-color: #777; border-radius: 2px; }
.combo input, .combo select { flex: 1; min-width: 0; padding: 0 4px; border: 0; background: none; outline: none; appearance: none; }
.combo.gray select { padding-left: 3px; }
.combo .tri { position: absolute; right: 3px; top: 8px; pointer-events: none; }
.options { display: flex; align-items: flex-start; padding: 10px 0 0 131px; line-height: 13px; }
.opt { display: flex; align-items: flex-start; gap: 3px; color: #2a6ccc; white-space: nowrap; }
.check { width: 148px; gap: 4px; }
.optlabel { width: 73px; color: #777; }
.opt input { appearance: none; flex: none; width: 11px; height: 11px; margin-top: 1px; border: 1px solid #8e8f8f; background: #fff; }
.opt input[type=radio] { border-radius: 50%; background: #e8e8e8; }
.opt input[type=radio]:checked { background: radial-gradient(circle, #4a90d8 0, #14386e 3px, #e4eef5 4px); }
.opt input[type=checkbox]:checked { background: linear-gradient(-45deg, transparent 45%, #2d4680 45% 57%, transparent 57%) 4px 1px / 5px 7px no-repeat, linear-gradient(45deg, transparent 42%, #2d4680 42% 62%, transparent 62%) 1px 4px / 4px 4px no-repeat, #e8edf3; }
.radios { display: flex; flex-direction: column; gap: 6px; }
.btn { justify-content: center; height: 22px; border: 1px solid #808080; border-radius: 3px; background: linear-gradient(#f3f3f3, #ebebeb 50%, #dcdcdc 51%, #d0d0d0); box-shadow: inset 0 0 0 1px #fafafa; }
.params { width: 118px; }
.actions { display: flex; align-items: center; margin-top: 17px; padding: 0 12px 0 9px; }
.hide { gap: 3px; margin-top: 4px; }
.service { margin-left: auto; margin-right: 14px; gap: 11px; }
.primary { width: 103px; border-color: #2f8fc4; box-shadow: inset 0 0 0 1px #6fd0f5; }
.cancel { width: 76px; margin-left: 12px; }
.resize { position: absolute; right: 1px; bottom: 1px; }
.mark-box { position: absolute; border: 4px solid #ee1c25; pointer-events: none; }
.one { left: 332px; top: 361px; width: 184px; height: 56px; }
.two { left: 348px; top: 456px; width: 137px; height: 38px; }
</style>
